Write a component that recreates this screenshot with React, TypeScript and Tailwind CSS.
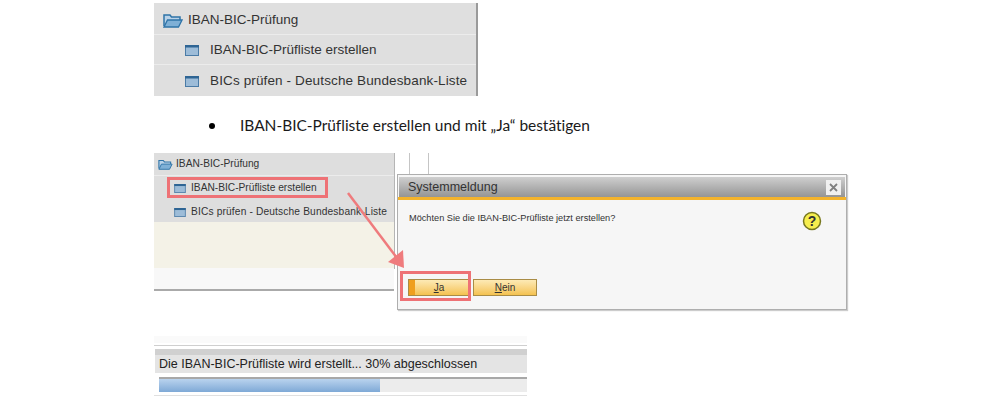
const ui = { fontFamily: "Tahoma, 'DejaVu Sans', sans-serif" };

function WindowIcon({ className }: { className: string }) {
  return (
    <svg className={className} viewBox="0 0 14 11">
      <rect x="0.5" y="0.5" width="13" height="10" fill="#9dbcd8" stroke="#4a7ba6" />
      <rect x="0" y="0" width="14" height="2.500" fill="#2f6594" />
    </svg>
  );
}

function FolderIcon({ className }: { className: string }) {
  return (
    <svg className={className} viewBox="0 0 20 15">
      <path d="M1 13V2h6l1.500 2H17v3" fill="#b9d2e8" stroke="#2f74a8" strokeWidth="1.500" />
      <path d="M1 14l3.500-7H19l-3.500 7z" fill="#7fb0d6" stroke="#2f74a8" strokeWidth="1.300" />
    </svg>
  );
}

function TopPanel() {
  return (
    <div className="w-[324px] h-[93px] mt-[3px] ml-[154px] bg-[#dfdfdf] border-r-2 border-[#9a9a9a] text-[#333] font-['Liberation_Sans'] text-[13.500px] whitespace-nowrap">
      <div className="h-[32px] pt-[3px] flex items-center pl-[9px] gap-[5px] border-b border-[#ececec]">
        <FolderIcon className="w-[20px] h-[15px]" />
        <span>IBAN-BIC-Prüfung</span>
      </div>
      <div className="h-[30px] pt-[2px] flex items-center pl-[31px] gap-[11px] border-b border-[#ececec]">
        <WindowIcon className="w-[14px] h-[11px]" />
        <span>IBAN-BIC-Prüfliste erstellen</span>
      </div>
      <div className="h-[31px] pt-[2px] flex items-center pl-[31px] gap-[11px]">
        <WindowIcon className="w-[14px] h-[11px]" />
        <span className="tracking-[0.130px]">BICs prüfen - Deutsche Bundesbank-Liste</span>
      </div>
    </div>
  );
}

function Instruction() {
  return (
    <div className="h-[42px] mt-[9px] pl-[209px] flex items-center font-['Lato'] text-[15.500px] text-[#1a1a1a]">
      <span className="w-[6px] h-[6px] rounded-full bg-black" />
      <span className="ml-[25px] tracking-[-0.030px]">IBAN-BIC-Prüfliste erstellen und mit „Ja“ bestätigen</span>
    </div>
  );
}

function DialogPanel() {
  return (
    <div className="relative mt-[6px] ml-[154px] w-[694px] h-[164px]">
      {/* background list behind the dialog */}
      <div className="w-[240px] h-[138px] border-b-2 border-[#aaaaaa] font-['Liberation_Sans'] text-[10.200px] text-[#333] whitespace-nowrap">
        <div className="h-[23px] bg-[#dedede] flex items-center pl-[4px] gap-[3px] border-b border-[#ececec]">
          <FolderIcon className="w-[15px] h-[11px]" />
          <span>IBAN-BIC-Prüfung</span>
        </div>
        <div className="h-[24px] bg-[#dedede] flex items-center pl-[20px] gap-[5px]">
          <WindowIcon className="w-[12px] h-[9px]" />
          <span>IBAN-BIC-Prüfliste erstellen</span>
        </div>
        <div className="h-[22px] pt-[2px] bg-[#dedede] flex items-center pl-[20px] gap-[5px]">
          <WindowIcon className="w-[12px] h-[9px]" />
          <span className="tracking-[0.150px]">BICs prüfen - Deutsche Bundesbank-Liste</span>
        </div>
        <div className="h-[46px] bg-[#f4f2e7]" />
        <div className="h-[21px] bg-[#f8f8f8]" />
      </div>

      <div className="absolute left-[240px] top-0 h-[116px] w-px bg-[#b5b5b5]" />
      <div className="absolute left-[255px] top-0 h-[22px] w-px bg-[#c5c5c5]" />
      <div className="absolute left-[274px] top-0 h-[22px] w-px bg-[#c5c5c5]" />

      {/* red highlight on the list entry */}
      <div className="absolute left-[13px] top-[24px] w-[161px] h-[21px] border-[3px] border-[#ee7276]" />

      {/* dialog */}
      <div className="absolute left-[243px] top-[21px] w-[450px] h-[136px] bg-[#f6f6f6] border border-[#aeaeae] shadow-[1px_1px_1px_#cccccc] font-['Liberation_Sans']">
        <div className="mt-[2px] h-[20px] mx-px bg-gradient-to-b from-[#cfcfcf] to-[#959595] flex items-center justify-between pl-[9px] pr-[4px] text-[12.500px] text-[#333]">
          <span>Systemmeldung</span>
          <span className="w-[15px] h-[15px] bg-[#f0f0f0] flex items-center justify-center">
            <svg className="w-[9px] h-[9px]" viewBox="0 0 9 9">
              <path d="M1 1l7 7M8 1L1 8" stroke="#808080" strokeWidth="1.800" />
            </svg>
          </span>
        </div>
        <div className="h-[3px] bg-[#f3b32c]" />
        <div className="flex justify-between pl-[11px] pr-[24px] pt-[10px]">
          <span className="text-[9.200px] text-[#333] leading-[16px]">Möchten Sie die IBAN-BIC-Prüfliste jetzt erstellen?</span>
          <svg className="w-[20px] h-[20px] mt-px" viewBox="0 0 20 20">
            <circle cx="10" cy="10" r="8.500" fill="#f6ee4e" stroke="#77771f" strokeWidth="1.500" />
            <text x="10" y="15" textAnchor="middle" fontSize="14" fontWeight="bold" fill="#333" fontFamily="Liberation Sans">?</text>
          </svg>
        </div>
        <div className="flex gap-[3px] pl-[10px] mt-[48px] text-[10px] text-[#333]">
          <div className="relative w-[62px] h-[17px] bg-gradient-to-b from-[#fdeab5] to-[#f4c24e] border border-[#a98c46] flex items-center justify-center">
            <span className="absolute left-0 top-0 h-full w-[6px] bg-[#ef9f1e]" />
            <span className="underline">J</span>a
          </div>
          <div className="w-[64px] h-[17px] bg-gradient-to-b from-[#fdeab5] to-[#f4c24e] border border-[#a98c46] flex items-center justify-center">
            <span className="underline">N</span>ein
          </div>
        </div>
      </div>

      {/* red highlight on the Ja button */}
      <div className="absolute left-[246px] top-[118px] w-[71px] h-[30px] border-[3px] border-[#ee7276]" />

      {/* arrow */}
      <svg className="absolute left-[190px] top-[35px]" width="70" height="85" viewBox="0 0 70 85">
        <path d="M4 5L53 70" stroke="#ef7b7d" strokeWidth="2.500" fill="none" />
        <path d="M60 80L59 62L44 74z" fill="#ef7b7d" />
      </svg>
    </div>
  );
}

function ProgressPanel() {
  return (
    <div className="ml-[154px] mt-[19px] w-[373px] font-['Liberation_Sans'] text-[12.500px] text-[#222] whitespace-nowrap">
      <div className="h-[7px] bg-[#fafafa]" />
      <div className="h-[1px] mt-[2px] bg-[#cfcfcf]" />
      <div className="mt-[3px] h-[24px] ml-px bg-[#e4e4e4] border-t-[6px] border-[#d0d0d0] flex items-center pl-[4px]">
        <span>Die IBAN-BIC-Prüfliste wird erstellt... 30% abgeschlossen</span>
      </div>
      <div className="mt-[4px] ml-[5px] h-[15px] bg-[#ececec] border-t-2 border-[#a8a8a8]">
        <div className="w-[221px] h-full bg-gradient-to-b from-[#b9d3ee] to-[#7fa9d6]" />
      </div>
      <div className="mt-[3px] h-px bg-[#e0e0e0]" />
    </div>
  );
}

export default function App() {
  return (
    <div className="w-[1000px] h-[400px] overflow-hidden bg-white" style={ui}>
      <div className="flex flex-col">
        <TopPanel />
        <Instruction />
        <DialogPanel />
        <ProgressPanel />
      </div>
    </div>
  );
}
